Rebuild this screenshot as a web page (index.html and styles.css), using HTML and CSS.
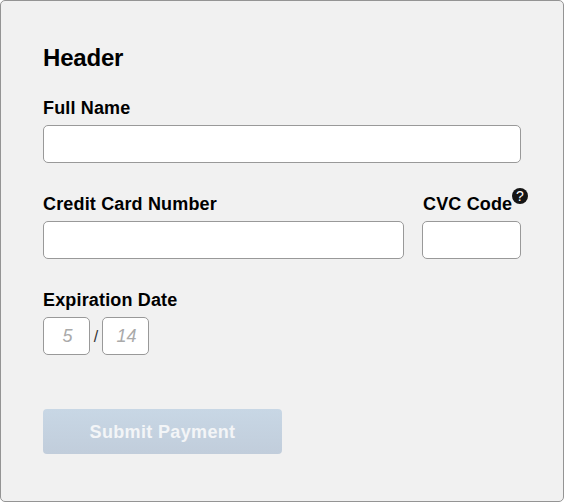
FILE: index.html
```html
<!DOCTYPE html>
<html lang="en">
<head>
<meta charset="utf-8">
<title>Payment</title>
<link rel="stylesheet" href="styles.css">
</head>
<body>
<form class="panel">
  <h1 class="title">Header</h1>
  <div class="field">
    <label class="label" for="name">Full Name</label>
    <input class="input" id="name" type="text">
  </div>
  <div class="row">
    <div class="field card">
      <label class="label" for="card">Credit Card Number</label>
      <input class="input" id="card" type="text">
    </div>
    <div class="field cvc">
      <label class="label" for="cvc">CVC Code<span class="help">?</span></label>
      <input class="input" id="cvc" type="text">
    </div>
  </div>
  <div class="field">
    <label class="label" for="month">Expiration Date</label>
    <div class="expiry">
      <input class="input short" id="month" type="text" placeholder="5">
      <span class="slash">/</span>
      <input class="input short" type="text" placeholder="14">
    </div>
  </div>
  <button class="submit" type="button" disabled>Submit Payment</button>
</form>
</body>
</html>
```
FILE: styles.css
```css
* { box-sizing: border-box; }
body { margin: 0; font-family: "Liberation Sans", Arial, sans-serif; background: #fff; color: #000; }
.panel { height: 502px; padding: 43px 42px 0; border: 1px solid #949494; border-radius: 5px; background: #f1f1f1; }
.title { margin: 0 0 26px; font-size: 24px; line-height: 28px; font-weight: bold; letter-spacing: -0.2px; }
.field { display: flex; flex-direction: column; height: 96px; }
.label { position: relative; height: 27px; font-size: 18px; line-height: 20px; font-weight: bold; letter-spacing: 0.16px; white-space: nowrap; }
.input { width: 100%; height: 38px; margin: 0; padding: 0; border: 1px solid #999; border-radius: 5px; background: #fff; font: 18px "Liberation Sans", Arial, sans-serif; }
.row { display: flex; gap: 18px; }
.card { width: 361px; }
.cvc { width: 99px; }
.cvc .label { padding-left: 1px; }
.help { position: absolute; left: 90px; top: -6px; width: 16px; height: 16px; border-radius: 50%; background: #151515; color: #fff; font-size: 14px; line-height: 17px; font-weight: normal; letter-spacing: 0; text-align: center; }
.expiry { display: flex; align-items: center; }
.short { width: 47px; padding-left: 2px; text-align: center; font-style: italic; }
.short::placeholder { color: #aaa; opacity: 1; }
.slash { width: 12px; text-align: center; font-size: 16px; line-height: 18px; padding-top: 1px; color: #333; }
.submit { display: block; width: 239px; height: 45px; margin-top: 23px; padding: 2px 0 0; border: 0; border-radius: 4px; background: linear-gradient(#c8d7e5, #c1cddb); color: #f3f5f7; font: bold 18px "Liberation Sans", Arial, sans-serif; letter-spacing: 0.35px; }
```
